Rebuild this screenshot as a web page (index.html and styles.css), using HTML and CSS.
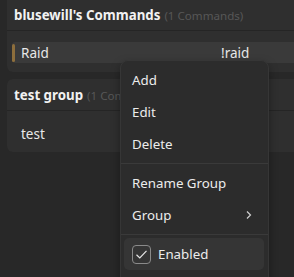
FILE: index.html
```html
<!DOCTYPE html>
<html>
<head>
<meta charset="utf-8">
<link rel="stylesheet" href="styles.css">
</head>
<body>
<div class="page">
  <section class="card first">
    <div class="card-head"><span class="title">blusewill's Commands</span> <span class="count">(1 Commands)</span></div>
    <div class="card-body">
      <div class="row active"><span class="bar"></span><span class="name">Raid</span><span class="cmd">!raid</span></div>
    </div>
  </section>
  <section class="card second">
    <div class="card-head"><span class="title">test group</span> <span class="count">(1 Commands)</span></div>
    <div class="card-body">
      <div class="row"><span class="name">test</span></div>
    </div>
  </section>
</div>
<div class="menu">
  <div class="item">Add</div>
  <div class="item">Edit</div>
  <div class="item">Delete</div>
  <div class="sep"></div>
  <div class="item">Rename Group</div>
  <div class="item sub">Group<svg class="chev" width="8" height="10" viewBox="0 0 8 10"><path d="M2 1.5 L5.5 5 L2 8.5" fill="none" stroke="#d0d0d0" stroke-width="1.2"/></svg></div>
  <div class="sep"></div>
  <div class="item check"><span class="box"><svg width="19" height="19" viewBox="0 0 19 19"><path d="M4.5 9.8 L7.8 13 L14.5 5.8" fill="none" stroke="#e6e6e6" stroke-width="1.2"/></svg></span>Enabled</div>
</div>
</body>
</html>
```
FILE: styles.css
```css
html, body { margin: 0; padding: 0; }
body {
  width: 294px; height: 277px; overflow: hidden;
  background: #282828;
  font-family: "Noto Sans", "Open Sans", sans-serif;
  color: #e8e8e8;
  position: relative;
}
.page { padding-left: 7px; display: flex; flex-direction: column; gap: 7px; margin-top: -6px; }
.card { background: #2f2f2f; border-radius: 6px; width: 320px; }
.card-head { height: 31px; border-bottom: 1px solid #252525; display: flex; align-items: center; padding-left: 7px; gap: 4px; font-size: 13.3px; box-sizing: border-box; }
.first .card-head { height: 37px; padding-top: 6px; }
.second .card-head { height: 32px; }
.title { font-weight: 700; color: #f2f2f2; }
.count { color: #575757; font-size: 11.6px; margin-top: 1px; }
.card-body { padding: 11px 0 9px 5px; }
.second .card-body { padding: 12px 0 8px 5px; }
.row { height: 21px; display: flex; align-items: center; font-size: 13.5px; position: relative; border-radius: 3px; }
.row.active { background: #3a3a3a; }
.bar { width: 3px; height: 18px; background: #8d6e3c; border-radius: 2px; margin-right: 6px; }
.name { width: 200px; }
.row:not(.active) .name { padding-left: 9px; }
.menu {
  position: absolute; left: 120px; top: 60px; width: 149px; height: 240px;
  background: #2c2c2c; border: 1px solid #363636; border-radius: 8px;
  box-shadow: 0 4px 10px rgba(0,0,0,0.35);
  padding-top: 3px; box-sizing: border-box;
  font-size: 13.3px; color: #ececec;
}
.item { height: 32px; display: flex; align-items: center; padding-left: 11px; position: relative; }
.sub .chev { position: absolute; left: 124px; top: 11px; }
.sep { height: 1px; background: #3a3a3a; margin: 3px 0; }
.check { margin: 3px 4px 0 3px; padding-left: 8px; background: #353535; border-radius: 5px; }
.box { width: 19px; height: 19px; border: 1px solid #8a8a8a; border-radius: 4px; box-sizing: border-box; margin-right: 7px; display: flex; }
.box svg { margin: -1px; }
```
